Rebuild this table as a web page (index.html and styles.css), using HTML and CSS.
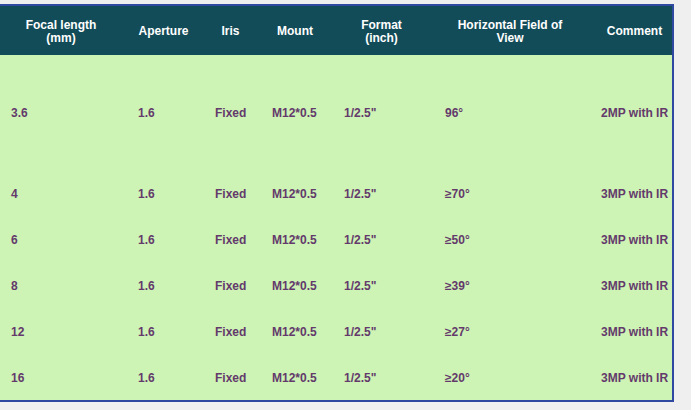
FILE: index.html
```html
<!DOCTYPE html>
<html>
<head>
<meta charset="utf-8">
<link rel="stylesheet" href="styles.css">
</head>
<body>
<table class="spec">
  <colgroup>
    <col class="c1"><col class="c2"><col class="c3"><col class="c4"><col class="c5"><col class="c6"><col class="c7">
  </colgroup>
  <thead>
    <tr>
      <th>Focal length<br>(mm)</th>
      <th>Aperture</th>
      <th>Iris</th>
      <th>Mount</th>
      <th>Format<br>(inch)</th>
      <th>Horizontal Field of<br>View</th>
      <th class="last">Comment</th>
    </tr>
  </thead>
  <tbody>
    <tr class="tall"><td>3.6</td><td>1.6</td><td>Fixed</td><td>M12*0.5</td><td>1/2.5"</td><td>96°</td><td>2MP with IR</td></tr>
    <tr><td>4</td><td>1.6</td><td>Fixed</td><td>M12*0.5</td><td>1/2.5"</td><td>≥70°</td><td>3MP with IR</td></tr>
    <tr><td>6</td><td>1.6</td><td>Fixed</td><td>M12*0.5</td><td>1/2.5"</td><td>≥50°</td><td>3MP with IR</td></tr>
    <tr><td>8</td><td>1.6</td><td>Fixed</td><td>M12*0.5</td><td>1/2.5"</td><td>≥39°</td><td>3MP with IR</td></tr>
    <tr><td>12</td><td>1.6</td><td>Fixed</td><td>M12*0.5</td><td>1/2.5"</td><td>≥27°</td><td>3MP with IR</td></tr>
    <tr><td>16</td><td>1.6</td><td>Fixed</td><td>M12*0.5</td><td>1/2.5"</td><td>≥20°</td><td>3MP with IR</td></tr>
  </tbody>
</table>
</body>
</html>
```

FILE: styles.css
```css
html, body {
  margin: 0;
  background: #efefef;
}
body {
  padding-top: 4px;
  font-family: "Liberation Sans", Arial, sans-serif;
  font-size: 12px;
  font-weight: bold;
}
.spec {
  margin-left: -2px;
  width: 676px;
  table-layout: fixed;
  border-collapse: separate;
  border-spacing: 0;
  border: 2px solid #2f49a1;
  background: #cef4b5;
}
.c1 { width: 128px; }
.c2 { width: 77px; }
.c3 { width: 57px; }
.c4 { width: 72px; }
.c5 { width: 101px; }
.c6 { width: 156px; }
.c7 { width: 81px; }
.spec th {
  box-sizing: border-box;
  background: #134c59;
  color: #ffffff;
  height: 49px;
  padding: 2px 6px 0 0;
  text-align: center;
  vertical-align: middle;
  line-height: 13px;
  font-weight: bold;
}
.spec th.last {
  padding: 2px 0 0 6px;
}
.spec td {
  box-sizing: border-box;
  height: 46px;
  padding: 1px 0 0 10px;
  color: #633a6b;
  text-align: left;
  vertical-align: middle;
  white-space: nowrap;
}
.spec td:first-child {
  padding-left: 11px;
}
.spec .tall td {
  height: 115px;
}
```
